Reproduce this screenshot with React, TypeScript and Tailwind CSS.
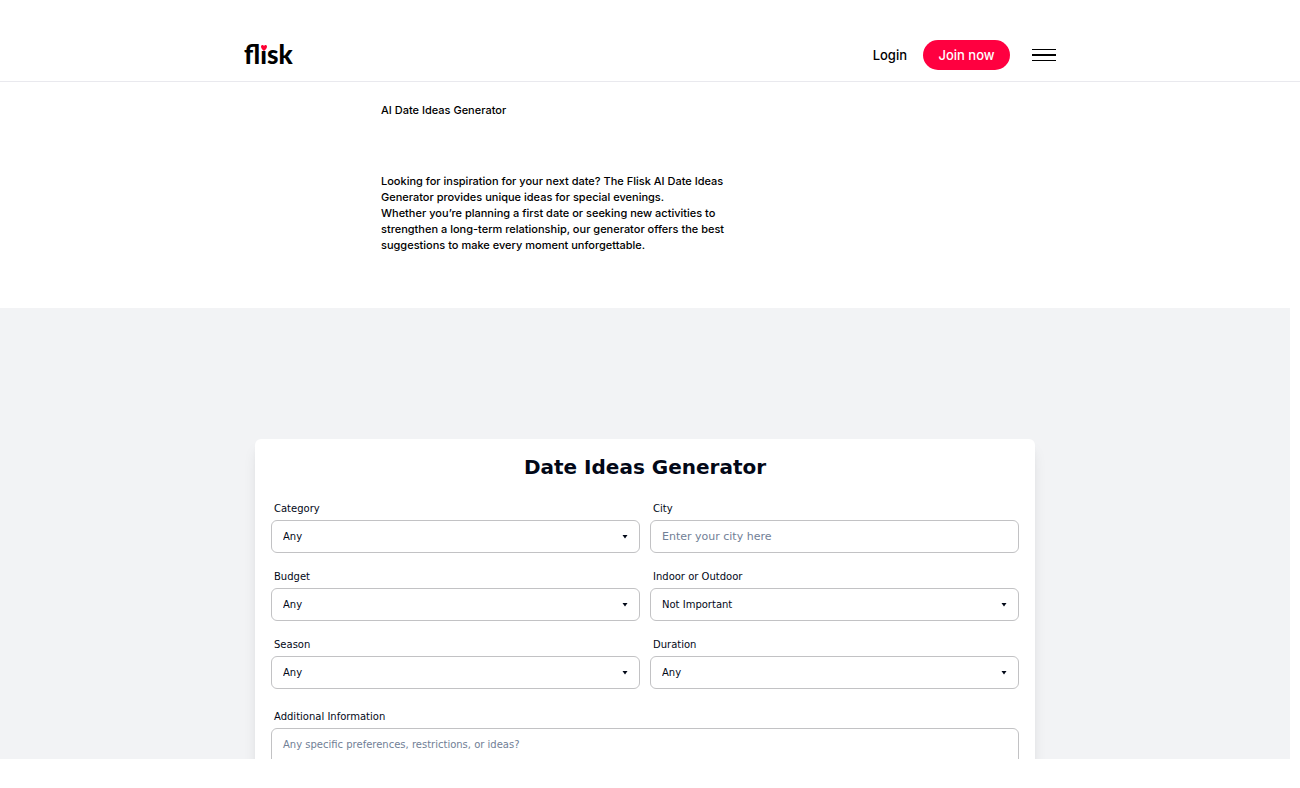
import React from 'react';

interface FieldProps { id: string; label: string; children: React.ReactNode; }
interface SelectFieldProps { id: string; label: string; options: string[]; }

const controlClass = 'block w-full rounded-md border border-[#c2c2c4] bg-white px-[11px] text-[#020817] placeholder:text-[#718096] placeholder:opacity-100';

function Logo() {
  return (
    <a href="/" aria-label="flisk" className="relative block font-['Lato'] text-[26px] leading-[33px] font-black text-black">
      flisk
      {/* the heart sits over the dot of the i */}
      <svg viewBox="0 -4 16 16" className="absolute top-[5px] left-4 size-2 bg-white" aria-hidden="true">
        <path d="M8 12C5 9.500 2 6.500 2 3.500C2 1.300 3.400 0 5 0C6.300 0 7.400.8 8 2C8.600.8 9.700 0 11 0C12.600 0 14 1.300 14 3.500C14 6.500 11 9.500 8 12Z" fill="#ff0033" />
      </svg>
    </a>
  );
}

function Header() {
  return (
    <header className="border-b border-[#e9e9ee] px-4 pt-7">
      <div className="mx-auto flex h-[53px] max-w-[812px] items-center justify-between">
        <Logo />
        <nav className="flex items-center">
          <a href="/login" className="mr-4 text-[13px] leading-5 font-medium">Login</a>
          <a href="/join" className="mr-[22px] flex h-[30px] w-[87px] items-center justify-center rounded-full bg-[#ff0040] text-[13px] leading-5 font-medium text-white">Join now</a>
          <button type="button" aria-label="Menu" className="flex w-6 flex-col gap-1">
            <span className="h-px w-full bg-black" />
            <span className="h-[2px] w-full bg-black" />
            <span className="h-px w-full bg-black" />
          </button>
        </nav>
      </div>
    </header>
  );
}

function Intro() {
  return (
    <section className="mx-auto max-w-[538px] pt-5 pb-[55px] text-[11px] leading-4 font-medium">
      <h1>AI Date Ideas Generator</h1>
      <p className="mt-[55px] max-w-[360px]">
        Looking for inspiration for your next date? The Flisk AI Date Ideas<br />
        Generator provides unique ideas for special evenings.<br />
        Whether you’re planning a first date or seeking new activities to<br />
        strengthen a long-term relationship, our generator offers the best<br />
        suggestions to make every moment unforgettable.
      </p>
    </section>
  );
}

function Field({ id, label, children }: FieldProps) {
  return (
    <div>
      <label htmlFor={id} className="mb-[3px] block pl-[3px] text-[10px] leading-4 text-[#020817]">{label}</label>
      {children}
    </div>
  );
}

function SelectField({ id, label, options }: SelectFieldProps) {
  return (
    <Field id={id} label={label}>
      <div className="relative">
        <select id={id} className={`${controlClass} h-[33px] appearance-none text-[10px]`}>
          {options.map((option) => <option key={option}>{option}</option>)}
        </select>
        <svg viewBox="0 0 6 4" className="pointer-events-none absolute top-[15px] right-3 h-1 w-[6px]" aria-hidden="true">
          <path d="M.5 0H5.500L3 3.500Z" fill="#020817" />
        </svg>
      </div>
    </Field>
  );
}

function GeneratorForm() {
  return (
    <form className="mx-auto max-w-[780px] rounded-md bg-white px-4 pt-[14px] pb-4 shadow-lg" onSubmit={(e) => e.preventDefault()}>
      <h2 className="mb-5 text-center text-xl leading-7 font-bold text-[#020817]">Date Ideas Generator</h2>
      <div className="grid grid-cols-2 gap-x-[10px] gap-y-4">
        <SelectField id="category" label="Category" options={['Any', 'Romantic', 'Adventure']} />
        <Field id="city" label="City">
          <input id="city" type="text" placeholder="Enter your city here" className={`${controlClass} h-[33px] text-[11px]`} />
        </Field>
        <SelectField id="budget" label="Budget" options={['Any', 'Low', 'High']} />
        <SelectField id="place" label="Indoor or Outdoor" options={['Not Important', 'Indoor', 'Outdoor']} />
        <SelectField id="season" label="Season" options={['Any', 'Summer', 'Winter']} />
        <SelectField id="duration" label="Duration" options={['Any', 'Short', 'Long']} />
      </div>
      <div className="mt-5">
        <Field id="info" label="Additional Information">
          <textarea id="info" placeholder="Any specific preferences, restrictions, or ideas?" className={`${controlClass} h-20 resize-none py-2 text-[10px] leading-4`} />
        </Field>
      </div>
    </form>
  );
}

export default function App() {
  return (
    <div className="bg-white font-['Inter',sans-serif] text-black">
      <Header />
      <main>
        <Intro />
        <section className="mr-[10px] h-[451px] overflow-hidden bg-[#f2f3f5] pt-[131px] font-['DejaVu_Sans',sans-serif]">
          <GeneratorForm />
        </section>
      </main>
    </div>
  );
}
